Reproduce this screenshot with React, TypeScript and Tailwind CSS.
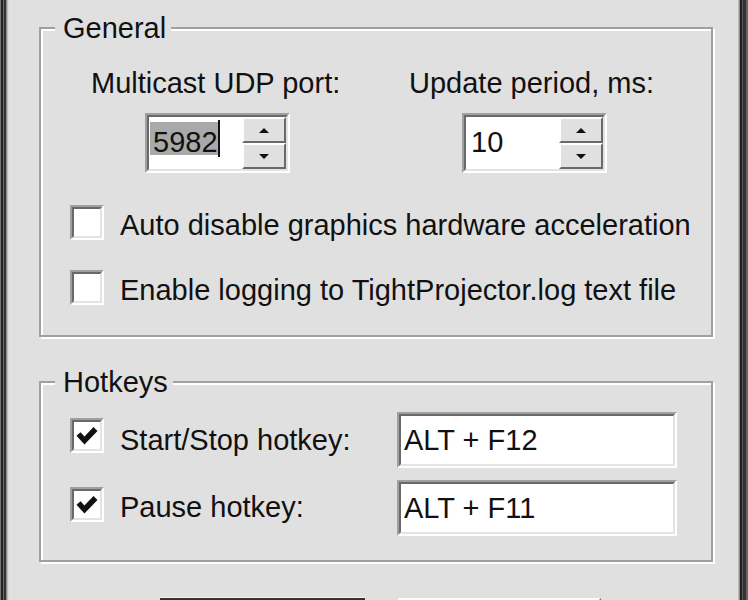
import type { ReactNode } from "react";

function Sunken({ className = "", children }: { className?: string; children?: ReactNode }) {
  return (
    <div className={`border-2 border-t-[#a0a0a0] border-l-[#a0a0a0] border-r-white border-b-white ${className}`}>
      <div className="h-full border-2 border-t-[#696969] border-l-[#696969] border-r-[#e3e3e3] border-b-[#e3e3e3] bg-white">
        {children}
      </div>
    </div>
  );
}

function GroupBox({ title, className = "", children }: { title: string; className?: string; children?: ReactNode }) {
  return (
    <div className={`relative border-2 border-[#a0a0a0] shadow-[inset_2px_2px_0_#fff,2px_2px_0_#fff] ${className}`}>
      <span className="absolute left-[14px] top-[-17px] bg-[#e0e0e0] pl-[8px] pr-[5px] leading-[32px]">{title}</span>
      {children}
    </div>
  );
}

function Arrow({ up }: { up?: boolean }) {
  return (
    <svg width="10" height="5" viewBox="0 0 10 5">
      <polygon points={up ? "5,0 10,5 0,5" : "0,0 10,0 5,5"} fill="#111" />
    </svg>
  );
}

function Spin({ children }: { children: ReactNode }) {
  return (
    <Sunken className="h-[60px] w-[145px]">
      <div className="flex h-full">
        <div className="flex flex-1 items-start">{children}</div>
        <div className="flex w-[44px] flex-col">
          <div className="flex h-[26px] items-center justify-center border-2 border-t-white border-l-white border-r-[#696969] border-b-[#696969] bg-[#e0e0e0]">
            <Arrow up />
          </div>
          <div className="flex h-[26px] items-center justify-center border-2 border-t-white border-l-white border-r-[#696969] border-b-[#696969] bg-[#e0e0e0]">
            <Arrow />
          </div>
        </div>
      </div>
    </Sunken>
  );
}

function Check({ checked }: { checked?: boolean }) {
  return (
    <Sunken className="h-[35px] w-[34px] shrink-0">
      {checked && (
        <div className="flex h-full items-center justify-center">
          <svg width="22" height="19" viewBox="0 0 22 19">
            <polyline points="2.5,8 8.5,14.5 19.5,3" fill="none" stroke="#111" strokeWidth="5.5" />
          </svg>
        </div>
      )}
    </Sunken>
  );
}

export default function App() {
  return (
    <div className="flex h-[600px] w-[748px] overflow-hidden bg-[#e0e0e0] font-[family-name:'Liberation_Sans',Arial,sans-serif] text-[29px] text-[#111]">
      <div className="w-[9px] shrink-0 bg-[linear-gradient(to_right,#777_0,#777_1px,#222_1px,#222_3px,#666_3px,#666_4px,#333_4px,#333_6px,#888_6px,#888_7px,#bbb_7px,#bbb_8px,#d8d8d8_8px)]" />

      <div className="flex-1 pl-[30px] pt-[27px]">
        {/* General */}
        <GroupBox title="General" className="h-[310px] w-[674px]">
          <div className="flex pt-[38px]">
            <div className="w-[350px] shrink-0 pl-[50px]">
              <div className="leading-[32px] whitespace-nowrap">Multicast UDP port:</div>
              <div className="ml-[54px] mt-[14px]">
                <Spin>
                  <span className="ml-[1px] mt-[5px] block h-[33px] w-[68px] bg-[#a9a9a9] pl-[3px] pt-[3px] leading-[34px]">5982</span>
                  <span className="mt-[3px] block h-[37px] w-[2px] bg-[#111]" />
                </Spin>
              </div>
            </div>
            <div className="ml-[18px]">
              <div className="leading-[32px] whitespace-nowrap">Update period, ms:</div>
              <div className="ml-[53px] mt-[14px]">
                <Spin>
                  <span className="block pl-[5px] pt-[8px] leading-[34px]">10</span>
                </Spin>
              </div>
            </div>
          </div>

          <div className="mt-[32px] flex flex-col gap-[30px] pl-[29px]">
            <div className="flex h-[35px] items-start">
              <Check />
              <span className="ml-[16px] mt-[4px] whitespace-nowrap leading-[32px]">Auto disable graphics hardware acceleration</span>
            </div>
            <div className="flex h-[35px] items-start">
              <Check />
              <span className="ml-[16px] mt-[4px] whitespace-nowrap leading-[32px]">Enable logging to TightProjector.log text file</span>
            </div>
          </div>
        </GroupBox>

        {/* Hotkeys */}
        <GroupBox title="Hotkeys" className="mt-[44px] h-[181px] w-[674px]">
          <div className="flex flex-col gap-[12px] pl-[29px] pt-[29px]">
            <div className="flex h-[56px] items-start">
              <div className="mt-[6px]">
                <Check checked />
              </div>
              <span className="ml-[16px] mt-[12px] w-[277px] whitespace-nowrap leading-[32px]">Start/Stop hotkey:</span>
              <Sunken className="h-[56px] w-[280px]">
                <div className="flex h-full items-center pl-[3px] leading-[32px]">ALT + F12</div>
              </Sunken>
            </div>
            <div className="flex h-[56px] items-start">
              <div className="mt-[7px]">
                <Check checked />
              </div>
              <span className="ml-[16px] mt-[11px] w-[277px] whitespace-nowrap leading-[32px]">Pause hotkey:</span>
              <Sunken className="h-[56px] w-[280px]">
                <div className="flex h-full items-center pl-[3px] leading-[32px]">ALT + F11</div>
              </Sunken>
            </div>
          </div>
        </GroupBox>

        {/* Dialog buttons (cut off at the bottom) */}
        <div className="mt-[35px] flex">
          <div className="ml-[121px] h-[40px] w-[205px] border-t border-t-[#f4f4f4]">
            <div className="h-full border-2 border-[#333] bg-[#e0e0e0]" />
          </div>
          <div className="ml-[33px] mt-[1px] h-[40px] w-[203px] border-t-2 border-r-2 border-t-white border-r-[#696969] bg-[#e0e0e0]" />
        </div>
      </div>

      <div className="w-[10px] shrink-0 bg-[linear-gradient(to_right,#bbb_0,#bbb_1px,#888_1px,#888_2px,#222_2px,#222_4px,#555_4px,#555_5px,#333_5px,#333_8px,#666_8px)]" />
    </div>
  );
}
